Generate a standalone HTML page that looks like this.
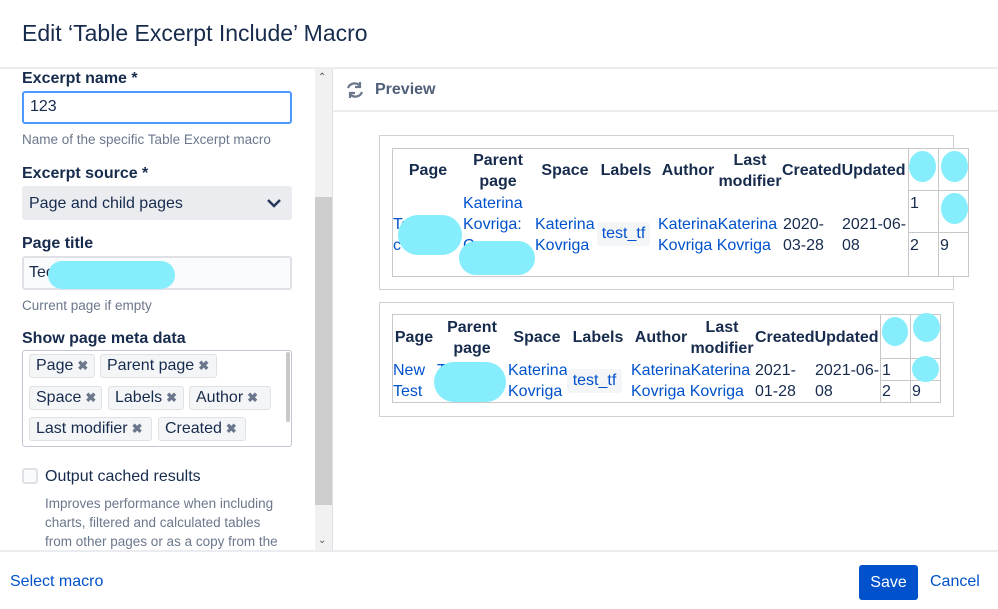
<!DOCTYPE html>
<html><head><meta charset="utf-8"><style>
*{margin:0;padding:0;box-sizing:border-box}
body{width:998px;height:609px;position:relative;overflow:hidden;background:#fff;font-family:"Liberation Sans",sans-serif;color:#172b4d}
.a{position:absolute;white-space:nowrap;line-height:18px}
.l{font-size:16px;font-weight:bold;color:#172b4d}
.h{font-size:13.5px;color:#6b778c}
.b{font-weight:bold;font-size:16px;color:#172b4d;text-align:center;line-height:21px}
.k{color:#0052cc;font-size:16px;line-height:21px}
.d{font-size:16px;line-height:21px;color:#172b4d}
.blob{position:absolute;background:#86edfc;border-radius:50%}
.tag{position:absolute;height:24px;background:#f4f5f7;border:1px solid #dfe1e6;border-radius:3px;font-size:16px;line-height:22px;padding-left:6px;color:#172b4d}
.tag i{font-style:normal;color:#6b778c;font-size:13px;font-weight:bold;margin-left:4px}
.ln{position:absolute;background:#c8c8c8}
.tf{position:absolute;background:#f4f5f7;border-radius:3px;color:#0052cc;font-size:16px;line-height:24px;text-align:center}
</style></head><body>
<div class="a" style="left:22px;top:20px;font-size:23px;line-height:26px;color:#172b4d">Edit ‘Table Excerpt Include’ Macro</div>
<div style="position:absolute;left:0;top:67px;width:998px;height:2px;background:#ebecf0"></div>

<div style="position:absolute;left:315px;top:69px;width:17px;height:482px;background:#f1f1f1"></div>
<div style="position:absolute;left:315px;top:197px;width:17px;height:308px;background:#cdcdcd"></div>
<div class="a" style="left:318px;top:69px;font-size:10px;color:#555">&#8963;</div>
<div class="a" style="left:318px;top:532px;font-size:10px;color:#555">&#8964;</div>
<div style="position:absolute;left:332px;top:69px;width:1px;height:482px;background:#dfe1e6"></div>

<div class="a l" style="left:22px;top:70px">Excerpt name *</div>
<div style="position:absolute;left:22px;top:91px;width:270px;height:33px;border:2px solid #4c9aff;border-radius:3px"></div>
<div class="a" style="left:30px;top:98px;font-size:16px">123</div>
<div class="a h" style="left:22px;top:131px">Name of the specific Table Excerpt macro</div>
<div class="a l" style="left:22px;top:165px">Excerpt source *</div>
<div style="position:absolute;left:22px;top:186px;width:270px;height:34px;background:#ebecf0;border-radius:3px"></div>
<div class="a" style="left:29px;top:195px;font-size:16px">Page and child pages</div>
<svg style="position:absolute;left:266px;top:196px" width="16" height="14"><path d="M2 4 L8 10 L14 4" stroke="#253858" stroke-width="2.5" fill="none"/></svg>
<div class="a l" style="left:22px;top:235px">Page title</div>
<div style="position:absolute;left:22px;top:256px;width:270px;height:34px;background:#fafbfc;border:2px solid #dfe1e6;border-radius:3px"></div>
<div class="a" style="left:29px;top:264px;font-size:16px">Tec</div>
<div class="blob" style="left:48px;top:261px;width:127px;height:28px;border-radius:14px"></div>
<div class="a h" style="left:22px;top:297px">Current page if empty</div>
<div class="a l" style="left:22px;top:330px">Show page meta data</div>
<div style="position:absolute;left:22px;top:350px;width:270px;height:97px;border:1px solid #c1c7d0;border-radius:3px"></div>
<div style="position:absolute;left:286px;top:352px;width:4px;height:70px;background:#c8c8c8;border-radius:2px"></div>
<div class="tag" style="left:29px;top:354px;width:66px">Page<i>✖</i></div>
<div class="tag" style="left:100px;top:354px;width:117px">Parent page<i>✖</i></div>
<div class="tag" style="left:29px;top:386px;width:73px">Space<i>✖</i></div>
<div class="tag" style="left:108px;top:386px;width:76px">Labels<i>✖</i></div>
<div class="tag" style="left:189px;top:386px;width:82px">Author<i>✖</i></div>
<div class="tag" style="left:29px;top:417px;width:123px">Last modifier<i>✖</i></div>
<div class="tag" style="left:158px;top:417px;width:88px">Created<i>✖</i></div>
<div style="position:absolute;left:22px;top:468px;width:16px;height:16px;border:2px solid #dfe1e6;border-radius:3px;background:#fafbfc"></div>
<div class="a" style="left:45px;top:468px;font-size:16px">Output cached results</div>
<div style="position:absolute;left:45px;top:494px;width:240px;height:56px;overflow:hidden;font-size:13.5px;line-height:19px;color:#6b778c">Improves performance when including charts, filtered and calculated tables from other pages or as a copy from the</div>

<svg style="position:absolute;left:345px;top:81px" width="20" height="18" viewBox="0 0 20 18"><path d="M15 5 A7 7 0 0 0 3 7" stroke="#6b778c" stroke-width="2.2" fill="none"/><path d="M15 1 V6 H10" stroke="#6b778c" stroke-width="2.2" fill="none"/><path d="M5 13 A7 7 0 0 0 17 11" stroke="#6b778c" stroke-width="2.2" fill="none"/><path d="M5 17 V12 H10" stroke="#6b778c" stroke-width="2.2" fill="none"/></svg>
<div class="a" style="left:375px;top:81px;font-size:16px;font-weight:bold;color:#505f79">Preview</div>
<div style="position:absolute;left:333px;top:110px;width:665px;height:2px;background:#ebecf0"></div>

<div style="position:absolute;left:379px;top:135px;width:575px;height:155px;border:1px solid #d0d0d0"></div>
<div style="position:absolute;left:392px;top:148px;width:577px;height:129px;border:1px solid #c8c8c8;background:#fff"></div>
<div class="ln" style="left:908px;top:148px;width:1px;height:129px"></div>
<div class="ln" style="left:938px;top:148px;width:1px;height:129px"></div>
<div class="ln" style="left:908px;top:190px;width:60px;height:1px"></div>
<div class="ln" style="left:908px;top:232px;width:60px;height:1px"></div>
<div class="a b" style="left:400px;top:160px;width:56px">Page</div>
<div class="a b" style="left:462px;top:150px;width:72px">Parent<br>page</div>
<div class="a b" style="left:535px;top:160px;width:60px">Space</div>
<div class="a b" style="left:598px;top:160px;width:56px">Labels</div>
<div class="a b" style="left:657px;top:160px;width:62px">Author</div>
<div class="a b" style="left:714px;top:150px;width:72px">Last<br>modifier</div>
<div class="a b" style="left:782px;top:160px;text-align:left">CreatedUpdated</div>
<div class="a k" style="left:393px;top:214px">Te<br>c</div>
<div class="a k" style="left:463px;top:193px">Katerina<br>Kovriga:<br>C</div>
<div class="a k" style="left:535px;top:214px">Katerina<br>Kovriga</div>
<div class="tf" style="left:597px;top:222px;width:53px">test_tf</div>
<div class="a k" style="left:658px;top:214px">KaterinaKaterina<br>Kovriga Kovriga</div>
<div class="a d" style="left:783px;top:214px">2020-<br>03-28</div>
<div class="a d" style="left:842px;top:214px">2021-06-<br>08</div>
<div class="a d" style="left:910px;top:193px">1</div>
<div class="a d" style="left:910px;top:235px">2</div>
<div class="a d" style="left:940px;top:235px">9</div>
<div class="blob" style="left:909px;top:151px;width:27px;height:31px"></div>
<div class="blob" style="left:941px;top:151px;width:27px;height:31px"></div>
<div class="blob" style="left:941px;top:193px;width:27px;height:31px"></div>
<div class="blob" style="left:398px;top:215px;width:64px;height:40px;border-radius:20px"></div>
<div class="blob" style="left:459px;top:241px;width:76px;height:34px;border-radius:17px"></div>

<div style="position:absolute;left:379px;top:302px;width:575px;height:115px;border:1px solid #d0d0d0"></div>
<div style="position:absolute;left:392px;top:314px;width:549px;height:89px;border:1px solid #c8c8c8;background:#fff"></div>
<div class="ln" style="left:880px;top:314px;width:1px;height:89px"></div>
<div class="ln" style="left:910px;top:314px;width:1px;height:89px"></div>
<div class="ln" style="left:880px;top:358px;width:60px;height:1px"></div>
<div class="ln" style="left:880px;top:380px;width:60px;height:1px"></div>
<div class="a b" style="left:394px;top:327px;width:40px">Page</div>
<div class="a b" style="left:436px;top:317px;width:72px">Parent<br>page</div>
<div class="a b" style="left:507px;top:327px;width:60px">Space</div>
<div class="a b" style="left:570px;top:327px;width:56px">Labels</div>
<div class="a b" style="left:630px;top:327px;width:62px">Author</div>
<div class="a b" style="left:686px;top:317px;width:72px">Last<br>modifier</div>
<div class="a b" style="left:755px;top:327px;text-align:left">CreatedUpdated</div>
<div class="a k" style="left:393px;top:360px">New<br>Test</div>
<div class="a k" style="left:437px;top:360px">Te</div>
<div class="a k" style="left:508px;top:360px">Katerina<br>Kovriga</div>
<div class="tf" style="left:567px;top:369px;width:55px">test_tf</div>
<div class="a k" style="left:631px;top:360px">KaterinaKaterina<br>Kovriga Kovriga</div>
<div class="a d" style="left:755px;top:360px">2021-<br>01-28</div>
<div class="a d" style="left:815px;top:360px">2021-06-<br>08</div>
<div class="a d" style="left:882px;top:360px">1<br>2</div>
<div class="a d" style="left:912px;top:381px">9</div>
<div class="blob" style="left:882px;top:317px;width:26px;height:29px"></div>
<div class="blob" style="left:913px;top:313px;width:27px;height:29px"></div>
<div class="blob" style="left:912px;top:356px;width:27px;height:26px"></div>
<div class="blob" style="left:434px;top:362px;width:72px;height:40px;border-radius:20px"></div>

<div style="position:absolute;left:0;top:550px;width:998px;height:2px;background:#ebecf0"></div>
<div class="a" style="left:10px;top:573px;font-size:16px;color:#0052cc">Select macro</div>
<div style="position:absolute;left:859px;top:565px;width:59px;height:35px;background:#0052cc;border-radius:3px;color:#fff;font-size:16px;line-height:35px;text-align:center">Save</div>
<div class="a" style="left:930px;top:573px;font-size:16px;color:#0052cc">Cancel</div>
</body></html>
